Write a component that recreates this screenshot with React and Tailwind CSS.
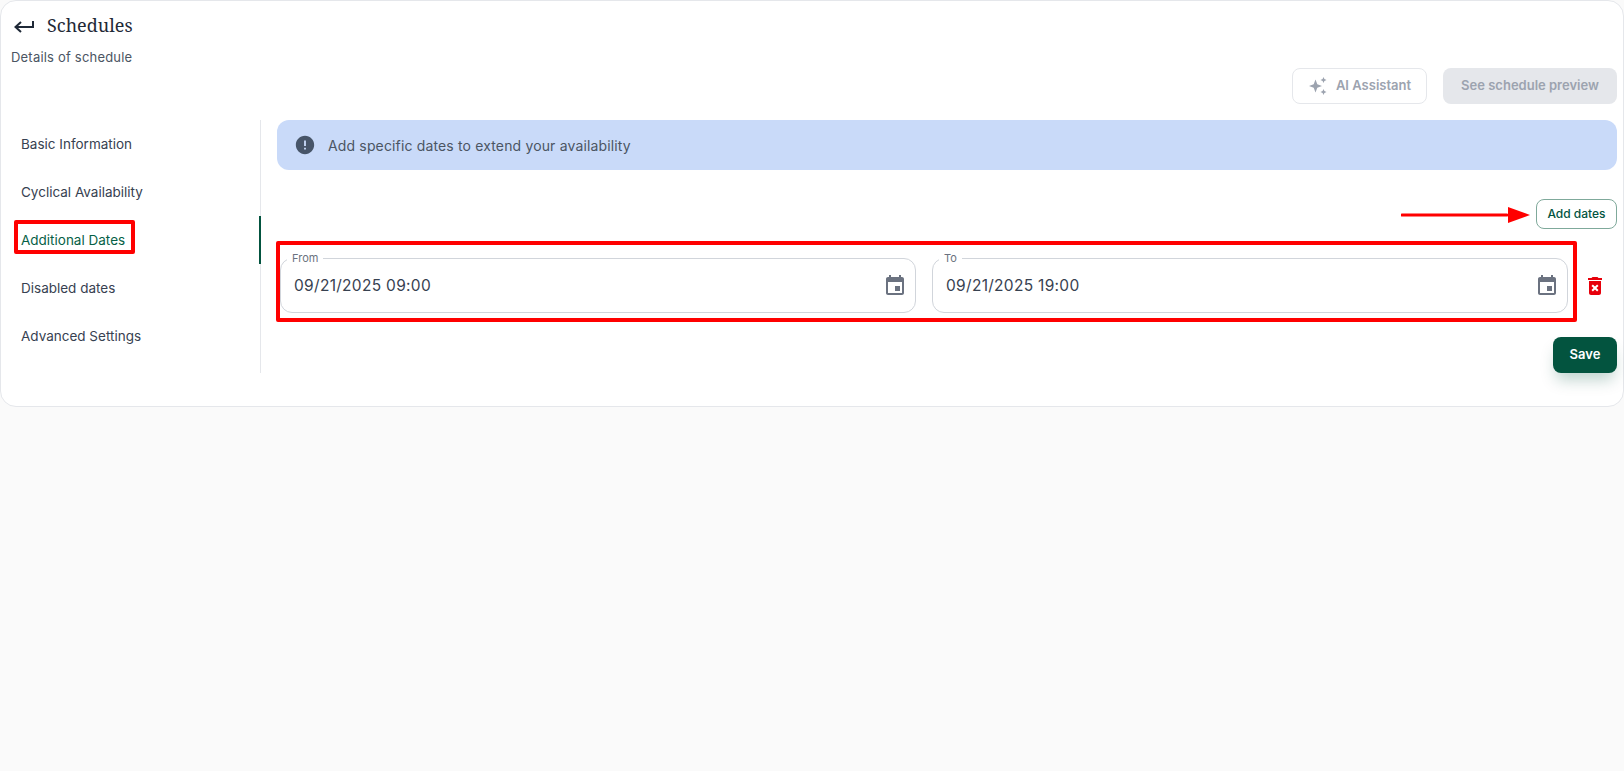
const sans = "font-['Inter',sans-serif]";

function BackArrow() {
  return (
    <svg width="22" height="16" viewBox="0 0 22 16" fill="none" stroke="#1f2937" strokeWidth="2">
      <path d="M20 2v6H3" />
      <path d="M8 3 2.500 8 8 13" />
    </svg>
  );
}

function Sparkle() {
  return (
    <svg width="20" height="20" viewBox="0 0 20 20" fill="#9ca3af">
      <path d="M7.500 3.500 9.300 8.200 14 10l-4.700 1.800L7.500 16.500 5.700 11.800 1 10l4.700-1.800z" />
      <path d="M15.500 1 16.400 3.100 18.500 4l-2.100.900-.900 2.100-.900-2.100L12.500 4l2.100-.900z" />
      <path d="M15.500 13 16.400 15.100 18.500 16l-2.100.900-.900 2.100-.900-2.100-2.100-.900 2.100-.900z" />
    </svg>
  );
}

function CalendarIcon() {
  return (
    <svg width="24" height="24" viewBox="0 0 24 24" fill="#6b7280">
      <path d="M17 12h-5v5h5v-5zM16 1v2H8V1H6v2H5c-1.110 0-1.990.900-1.990 2L3 19c0 1.100.890 2 2 2h14c1.100 0 2-.900 2-2V5c0-1.100-.900-2-2-2h-1V1h-2zm3 18H5V8h14v11z" />
    </svg>
  );
}

function DateField({ label, value, labelWidth }) {
  return (
    <div className="relative flex h-[55px] flex-1 items-center justify-between rounded-xl border border-[#d1d5db] pl-[13px] pr-[8px]">
      <span className={`absolute -top-[8px] left-[6px] bg-white px-[5px] text-[11px] leading-[14px] text-[#6b7280] ${labelWidth}`}>{label}</span>
      <span className="text-[15.500px] tracking-[0.3px] text-[#374151]">{value}</span>
      <CalendarIcon />
    </div>
  );
}

const nav = ["Basic Information", "Cyclical Availability", "Additional Dates", "Disabled dates", "Advanced Settings"];

export default function App() {
  return (
    <div className={`min-h-[771px] bg-[#fafafa] ${sans}`}>
      <div className="h-[407px] rounded-b-2xl rounded-t-2xl border border-[#e5e7eb] bg-white">
        <div className="flex h-[37px] items-end pl-[12px]">
          <div className="flex items-center gap-[12px]">
            <span className="mt-[3px]"><BackArrow /></span>
            <h1 className="font-['Noto_Serif','DejaVu_Serif',serif] text-[18px] leading-[26px] text-[#1f2937]">Schedules</h1>
          </div>
        </div>
        <p className="mt-[10px] pl-[10px] text-[13px] leading-[18px] tracking-[0.2px] text-[#4b5563]">Details of schedule</p>

        <div className="mt-[2px] flex h-[36px] justify-end gap-[16px] pr-[6px]">
          <div className="flex w-[135px] items-center justify-center gap-[8px] rounded-lg border border-[#e5e7eb] text-[13px] font-semibold text-[#9ca3af]">
            <Sparkle />
            AI Assistant
          </div>
          <div className="flex w-[174px] items-center justify-center rounded-lg bg-[#e5e7eb] text-[13px] font-semibold text-[#9ca3af]">See schedule preview</div>
        </div>

        <div className="mt-[16px] flex">
          <nav className="w-[260px] shrink-0 border-r border-[#e5e7eb]">
            {nav.map((item, i) => (
              <div
                key={item}
                className={`relative flex h-[48px] items-center pl-[20px] text-[13.500px] ${i === 2 ? "text-[#065f46]" : "text-[#374151]"}`}
              >
                {item}
                {i === 2 && (
                  <>
                    <span className="absolute -right-px top-0 h-full w-[2px] bg-[#03543f]" />
                    <span className="absolute left-[13px] top-[4px] h-[34px] w-[121px] rounded-[2px] border-4 border-[#ff0000]" />
                  </>
                )}
              </div>
            ))}
          </nav>

          <main className="flex-1 pl-[16px] pr-[6px]">
            <div className="flex h-[50px] items-center gap-[12px] rounded-xl bg-[#c9daf9] px-[17px] text-[14px] tracking-[0.15px] text-[#4b5563]">
              <svg width="22" height="22" viewBox="0 0 24 24" fill="#475569">
                <path d="M12 2C6.480 2 2 6.480 2 12s4.480 10 10 10 10-4.480 10-10S17.520 2 12 2zm1 15h-2v-2h2v2zm0-4h-2V7h2v6z" />
              </svg>
              Add specific dates to extend your availability
            </div>

            <div className="relative mt-[29px] flex justify-end">
              <div className="relative flex h-[30px] w-[81px] items-center justify-center rounded-lg border border-[#7fa99b] text-[12px] font-medium text-[#03543f]">
                Add dates
              </div>
              <svg className="absolute right-[86px] top-[7px]" width="130" height="18" viewBox="0 0 130 18">
                <path d="M1 9h105" stroke="#ff0000" strokeWidth="3" strokeLinecap="round" />
                <path d="M107 1l22 8-22 8z" fill="#ff0000" />
              </svg>
            </div>

            <div className="relative mt-[29px] flex items-center">
              <div className="flex w-[1291px] gap-[16px] pl-[3px]">
                <DateField label="From" value="09/21/2025 09:00" />
                <DateField label="To" value="09/21/2025 19:00" />
              </div>
              <div className="ml-[15px]">
                <svg width="24" height="24" viewBox="0 0 24 24" fill="#e7000b">
                  <path d="M6 19c0 1.100.900 2 2 2h8c1.100 0 2-.900 2-2V7H6v12zm2.460-7.120 1.410-1.410L12 12.590l2.120-2.120 1.410 1.410L13.410 14l2.120 2.120-1.410 1.410L12 15.410l-2.120 2.120-1.410-1.410L10.590 14l-2.130-2.120zM15.500 4l-1-1h-5l-1 1H5v2h14V4z" />
                </svg>
              </div>
              <span className="pointer-events-none absolute -left-[1px] -top-[17px] h-[81px] w-[1301px] rounded-[2px] border-4 border-[#ff0000]" />
            </div>

            <div className="mt-[24px] flex justify-end">
              <div className="flex h-[36px] w-[64px] items-center justify-center rounded-lg bg-[#03543f] text-[13px] font-semibold text-white shadow-[0_10px_15px_-3px_rgba(3,84,63,0.25)]">
                Save
              </div>
            </div>
          </main>
        </div>
      </div>
    </div>
  );
}
